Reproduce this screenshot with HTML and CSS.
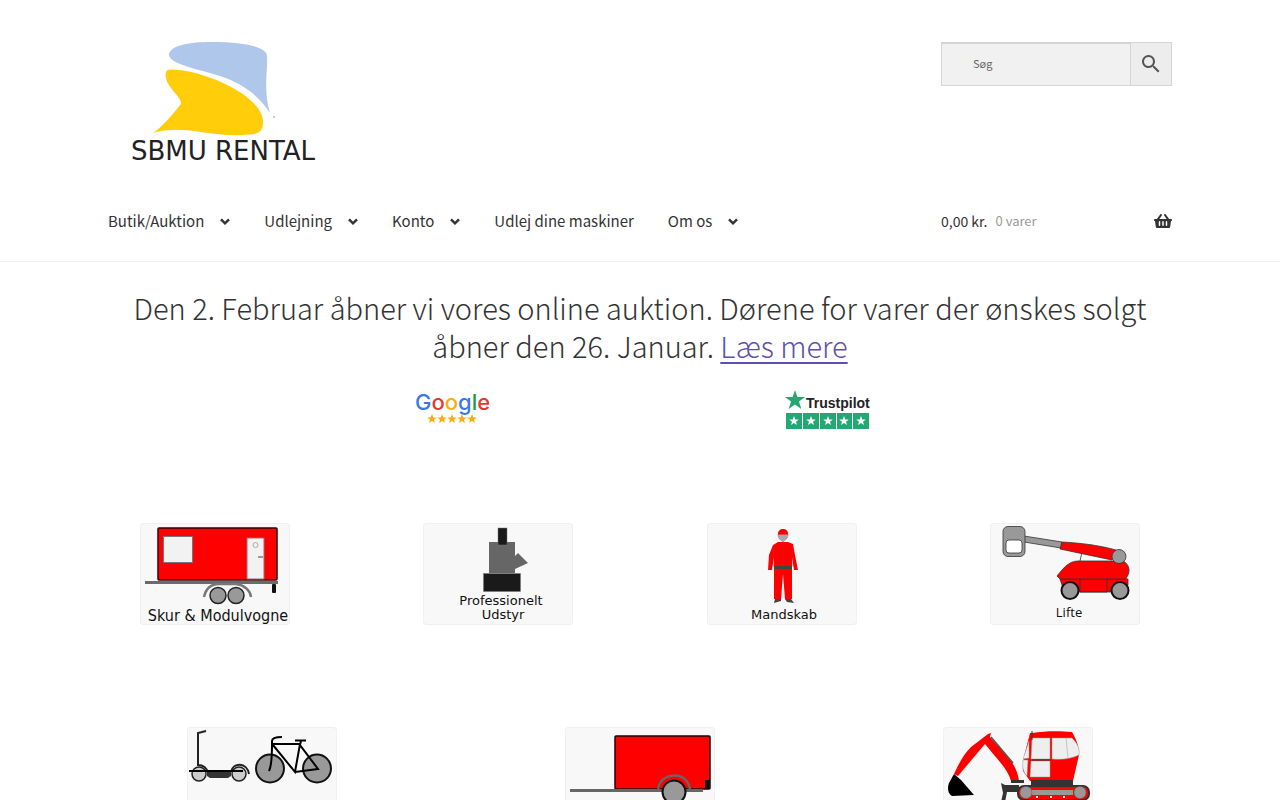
FILE: index.html
```
<!DOCTYPE html>
<html lang="da">
<head>
    <meta charset="UTF-8">
    <meta name="viewport" content="width=device-width, initial-scale=1.0">
    <title>SBMU Rental</title>
    <link rel="stylesheet" href="styles.css">
</head>
<body>
    <header class="site-header">
        <div class="container">
            <div class="header-top">
                <a href="#" class="logo" aria-label="SBMU Rental">
                    <svg width="230" height="120" viewBox="0 0 230 120">
                        <path fill="#afc7ea" d="M61 12C63 3 82 0 104 0C137 0 159 5 159 14C160 28 155 48 162 71C151 54 136 42 112 34C90 27 60 22 61 12Z"/>
                        <path fill="#ffcd0a" d="M58 30C59 26 70 28 78 29C114 36 155 58 155 80C155 90 151 93 134 93C101 95 75 82 45 91C54 85 66 71 73 62C74 54 55 44 58 30Z"/>
                        <circle cx="166" cy="75" r="1" fill="#bbb"/>
                        <text x="115" y="118" text-anchor="middle" class="logo-text">SBMU RENTAL</text>
                    </svg>
                </a>
                <form class="search" role="search">
                    <input type="search" placeholder="Søg" aria-label="Søg">
                    <button type="submit" aria-label="Søg">
                        <svg width="24" height="24" viewBox="0 0 24 24" fill="#555">
                            <path d="M15.5 14h-.79l-.28-.27A6.5 6.5 0 1 0 13.73 14.43l.27.28v.79l5 5L20.5 19zm-6 0A4.5 4.5 0 1 1 14 9.5 4.5 4.5 0 0 1 9.5 14z"/>
                        </svg>
                    </button>
                </form>
            </div>
            <div class="header-bottom">
                <nav class="main-nav">
                    <a href="#">Butik/Auktion <svg class="arrow" width="10" height="7" viewBox="0 0 10 7"><path d="M1 1.3l4 4 4-4"/></svg></a>
                    <a href="#">Udlejning <svg class="arrow" width="10" height="7" viewBox="0 0 10 7"><path d="M1 1.3l4 4 4-4"/></svg></a>
                    <a href="#">Konto <svg class="arrow" width="10" height="7" viewBox="0 0 10 7"><path d="M1 1.3l4 4 4-4"/></svg></a>
                    <a href="#">Udlej dine maskiner</a>
                    <a href="#">Om os <svg class="arrow" width="10" height="7" viewBox="0 0 10 7"><path d="M1 1.3l4 4 4-4"/></svg></a>
                </nav>
                <a href="#" class="cart">
                    <span class="amount">0,00 kr.</span>
                    <span class="count">0 varer</span>
                    <svg width="18" height="16" viewBox="0 0 576 512" fill="#333">
                        <path d="M576 216v16c0 13.255-10.745 24-24 24h-8l-26.113 182.788C514.509 462.435 494.257 480 470.37 480H105.63c-23.887 0-44.139-17.565-47.518-41.212L32 256h-8c-13.255 0-24-10.745-24-24v-16c0-13.255 10.745-24 24-24h67.341l106.78-146.821c10.395-14.292 30.407-17.453 44.701-7.058 14.293 10.395 17.453 30.408 7.058 44.701L170.477 192h235.046L326.12 82.821c-10.395-14.292-7.234-34.306 7.059-44.701 14.291-10.395 34.306-7.235 44.701 7.058L484.659 192H552c13.255 0 24 10.745 24 24zM312 392V280c0-13.255-10.745-24-24-24s-24 10.745-24 24v112c0 13.255 10.745 24 24 24s24-10.745 24-24zm112 0V280c0-13.255-10.745-24-24-24s-24 10.745-24 24v112c0 13.255 10.745 24 24 24s24-10.745 24-24zm-224 0V280c0-13.255-10.745-24-24-24s-24 10.745-24 24v112c0 13.255 10.745 24 24 24s24-10.745 24-24z"/>
                    </svg>
                </a>
            </div>
        </div>
    </header>

    <main>
        <h2 class="notice">Den 2. Februar åbner vi vores online auktion. Dørene for varer der ønskes solgt åbner den 26. Januar. <a href="#">Læs mere</a></h2>

        <div class="reviews">
            <a href="#" aria-label="Google anmeldelser">
                <svg width="76" height="40" viewBox="0 0 76 40">
                    <defs>
                        <path id="star" d="M0-5L1.3-1.6 4.8-1.5 2 .7 3 4.1 0 2.1-3 4.1-2 .7-4.8-1.5-1.3-1.6Z"/>
                    </defs>
                    <text x="0" y="20" class="google-text"><tspan fill="#3b78e7">G</tspan><tspan fill="#e33b32">o</tspan><tspan fill="#f6b011">o</tspan><tspan fill="#3b78e7">g</tspan><tspan fill="#1e9a4b">l</tspan><tspan fill="#e33b32">e</tspan></text>
                    <g fill="#f9ab0a">
                        <use href="#star" x="17" y="29"/>
                        <use href="#star" x="27" y="29"/>
                        <use href="#star" x="37" y="29"/>
                        <use href="#star" x="47" y="29"/>
                        <use href="#star" x="57" y="29"/>
                    </g>
                </svg>
            </a>
            <a href="#" aria-label="Trustpilot anmeldelser">
                <svg width="86" height="40" viewBox="0 0 86 40">
                    <path fill="#22a873" d="M10 0L12.4 7H20L14 11.500 16.300 19 10 14.500 3.700 19 6 11.500 0 7H7.600Z"/>
                    <text x="21" y="18" class="trustpilot-text">Trustpilot</text>
                    <path fill="#22a873" d="M1 23h16v16H1zM18 23h16v16H18zM35 23h16v16H35zM52 23h15v16H52zM68 23h16v16H68z"/>
                    <g fill="#fff">
                        <use href="#star" x="9" y="31"/>
                        <use href="#star" x="26" y="31"/>
                        <use href="#star" x="43" y="31"/>
                        <use href="#star" x="59" y="31"/>
                        <use href="#star" x="76" y="31"/>
                    </g>
                </svg>
            </a>
        </div>

        <div class="categories four">
            <a href="#" class="card">
                <svg viewBox="0 0 150 102">
                    <rect x="18" y="5" width="119" height="52" rx="1" fill="#f00" stroke="#300" stroke-width="1.500"/>
                    <rect x="23.500" y="13.500" width="29" height="26" fill="#f2f2f2" stroke="#777"/>
                    <rect x="107" y="15" width="17" height="41" fill="#f2f2f2" stroke="#a66"/>
                    <circle cx="115.500" cy="22" r="2.500" fill="none" stroke="#aaa"/>
                    <path d="M118 34h5" stroke="#444"/>
                    <path d="M5 59.500h133" stroke="#6b6b6b" stroke-width="3"/>
                    <path d="M64 74C66 65 72 61 79 61h17C104 62 110 67 111 74" fill="none" stroke="#777" stroke-width="2.500"/>
                    <g fill="#999" stroke="#222" stroke-width="1.500">
                        <circle cx="78" cy="72.500" r="8"/>
                        <circle cx="96" cy="72.500" r="8"/>
                    </g>
                    <rect x="132" y="61" width="4" height="9" rx="1" fill="#111"/>
                    <text x="78" y="98" class="label condensed">Skur &amp; Modulvogne</text>
                </svg>
            </a>
            <a href="#" class="card">
                <svg viewBox="0 0 150 102">
                    <path fill="#666" d="M66 19h26v14l3-3 10 10-13 6v4H66z"/>
                    <rect x="75" y="5" width="9" height="17" fill="#1a1a1a" stroke="#777" stroke-width=".5"/>
                    <rect x="60.500" y="50.500" width="37" height="18" fill="#1a1a1a" stroke="#777" stroke-width=".5"/>
                    <text x="78" y="82" class="label">Professionelt</text>
                    <text x="80" y="96" class="label">Udstyr</text>
                </svg>
            </a>
            <a href="#" class="card">
                <svg viewBox="0 0 150 102">
                    <path fill="#aaa" stroke="#777" stroke-width=".5" d="M71 11h10c0 5-3 6-5 8-2-2-5-3-5-8z"/>
                    <path fill="#f00" d="M71 11.500C70 4 82 4 81 11.500z"/>
                    <path fill="#f00" d="M71 19h10l5 2 2 11 3 15h-4l-2-13v42h-7l-2-25-2 25h-7V34l-2 13h-4l1-15 4-10z"/>
                    <path stroke="#a33" stroke-width=".5" fill="none" d="M76 20v24M67 24v20M85 24v20"/>
                    <path fill="#444" d="M67 43h18v3H67zM68 76h6v2l-7 2zM78 76h6l3 4-7-1z"/>
                    <text x="77" y="96" class="label">Mandskab</text>
                </svg>
            </a>
            <a href="#" class="card">
                <svg viewBox="0 0 150 102">
                    <g stroke="#333" stroke-width=".8">
                        <path fill="#999" d="M34 13l38 6-1 6-37-6z"/>
                        <rect x="13" y="3.500" width="22" height="30" rx="5" fill="#999"/>
                        <rect x="16" y="17" width="16" height="13" rx="3" fill="#fff"/>
                        <path fill="#f00" d="M90 38l2-9M70 56l3 9 4 4h55l6-7V56z"/>
                        <path fill="none" d="M90 56v13h27V56"/>
                        <path fill="#f00" d="M67 53C72 47 78 38 88 38h45c4 2 6 6 6 9 0 5-2 6-3 9H70z"/>
                        <path fill="#f00" d="M72 19C90 20 108 22 126 27l-4 10-52-11z"/>
                        <circle cx="129" cy="33.500" r="7" fill="#999"/>
                    </g>
                    <g fill="#999" stroke="#111" stroke-width="2">
                        <circle cx="80" cy="67.500" r="8.500"/>
                        <circle cx="130" cy="67.500" r="8.500"/>
                    </g>
                    <text x="79" y="94" class="label open">Lifte</text>
                </svg>
            </a>
        </div>

        <div class="categories three">
            <a href="#" class="card" aria-label="Løbehjul og cykler">
                <svg viewBox="0 0 150 102">
                    <g fill="#ccc" stroke="#222" stroke-width="1.500">
                        <circle cx="12" cy="47" r="7"/>
                        <circle cx="52" cy="47" r="7"/>
                    </g>
                    <path d="M20 45h24v4l-3 2H23l-3-2z" fill="#333"/>
                    <path d="M19 4l-8 2v32c6 0 9 4 10 8M44 45c2-10 16-10 18 2" fill="none" stroke="#222" stroke-width="2"/>
                    <path d="M2 44h54" stroke="#000" stroke-width="2"/>
                    <g fill="#999" stroke="#111" stroke-width="2">
                        <circle cx="83" cy="41.500" r="14"/>
                        <circle cx="130" cy="41.500" r="14"/>
                    </g>
                    <path d="M82 44c3-6 3-16 3-27v-3c0-3 4-4 10-4M86 17h27L108 45 86 18M108 45l23-3-18-24 1-4M108 13.500h11" fill="none" stroke="#000" stroke-width="2"/>
                </svg>
            </a>
            <a href="#" class="card" aria-label="Trailere">
                <svg viewBox="0 0 150 102">
                    <rect x="50" y="9" width="95" height="53" rx="1" fill="#f00" stroke="#200" stroke-width="1.500"/>
                    <path d="M5 63.500h133" stroke="#666" stroke-width="3"/>
                    <path d="M93 64c0-20 32-21 32 0" fill="none" stroke="#666" stroke-width="2.500"/>
                    <circle cx="109" cy="65" r="11.500" fill="#999" stroke="#111" stroke-width="2"/>
                    <rect x="140" y="53" width="5" height="9" rx="1" fill="#111"/>
                </svg>
            </a>
            <a href="#" class="card" aria-label="Entreprenørmaskiner">
                <svg viewBox="0 0 150 102">
                    <path fill="#f00" d="M11 47C16 36 21 27 28 20L45 7l3-1-1 4 17 19c8 9 11 17 12 25h-8C65 42 53 31 42 17L15 49z"/>
                    <path d="M48 10l22 26" stroke="#555" stroke-width="1.500"/>
                    <path fill="#000" d="M11 47l7 6 13 15-22 1c-4-2-5-8-3-13z"/>
                    <path fill="#f00" d="M89 6c12-2 28-2 40-1 4 7 7 13 7 23l-6 26H87L80 44c-1-11 4-25 7-38z"/>
                    <g fill="#eee" stroke="#999" stroke-width=".5">
                        <path d="M89 11h18v21H88zM88 34h19v16H87zM109 11h20c5 5 8 10 7 17-9 4-17 5-27 4zM123 11l2 20M86 14v17l-6 1zM80 33h5l-1 16c-4-4-5-9-4-16z"/>
                    </g>
                    <path d="M89 4v9M89 33h18" stroke="#333"/>
                    <path fill="#333" d="M88 53h42v6H88zM68 53h13v3H68zM58 56l4 2h14v7H64l-2 10h-4l2-9z"/>
                    <rect x="75" y="59" width="71" height="14" rx="6" fill="#f00" stroke="#333" stroke-width="2"/>
                    <path d="M89 65.500h41" stroke="#999" stroke-width="5"/>
                    <g fill="#999" stroke="#666" stroke-width=".5">
                        <circle cx="83" cy="65.500" r="6"/>
                        <circle cx="137" cy="65.500" r="6"/>
                    </g>
                    <path d="M93 70h2M107 70h2M120 70h2" stroke="#fff" stroke-width="2"/>
                </svg>
            </a>
        </div>
    </main>
</body>
</html>
```
FILE: styles.css
```
* {
  box-sizing: border-box;
}

body {
  margin: 0;
  background-color: #fff;
  color: #333;
  font-family: "Noto Sans CJK SC", "Open Sans", sans-serif;
  font-size: 15px;
  line-height: 24px;
}

a {
  color: inherit;
  text-decoration: none;
}

svg {
  display: block;
  overflow: visible;
}

.container {
  max-width: 1064px;
  margin: 0 auto;
}

.site-header {
  padding: 42px 32px 28px;
  border-bottom: 1px solid #f0f0f0;
}

.header-top {
  display: flex;
  justify-content: space-between;
  align-items: flex-start;
}

.logo-text {
  font-family: "DejaVu Sans", sans-serif;
  font-size: 26px;
  fill: #222;
}

.search {
  display: flex;
  width: 231px;
  height: 44px;
  border: 1px solid #d4d4d4;
}

.search input {
  flex: 1;
  min-width: 0;
  padding: 0 31px 4px;
  border: none;
  border-top: 1px solid #d4d4d4;
  border-radius: 0;
  background-color: #f1f1f1;
  color: #555;
  font-family: inherit;
  font-size: 11px;
  appearance: none;
}

.search input::placeholder {
  color: #666;
}

.search button {
  display: flex;
  align-items: center;
  justify-content: center;
  width: 41px;
  padding: 0;
  border: none;
  border-left: 1px solid #d4d4d4;
  background-color: #ededed;
  cursor: pointer;
}

.header-bottom {
  display: flex;
  justify-content: space-between;
  margin-top: 47px;
}

.main-nav {
  display: flex;
  gap: 34px;
}

.main-nav a {
  display: flex;
  align-items: center;
  gap: 16px;
}

.arrow {
  fill: none;
  stroke: #333;
  stroke-width: 2.5;
}

.cart {
  display: flex;
  align-items: center;
  width: 231px;
}

.amount {
  font-size: 14px;
}

.count {
  margin-left: 8px;
  color: #999;
  font-size: 13px;
}

.cart svg {
  margin-left: auto;
}

.notice {
  max-width: 1064px;
  margin: 26px auto 0;
  font-size: 29px;
  font-weight: 300;
  line-height: 38px;
  text-align: center;
}

.notice a {
  color: #5f4fb0;
  text-decoration: underline;
  text-decoration-thickness: 2px;
  text-underline-offset: 4px;
}

.reviews {
  display: flex;
  justify-content: center;
  gap: 294px;
  margin-top: 26px;
  padding-left: 5px;
}

.google-text {
  font-family: Inter, sans-serif;
  font-size: 22px;
  font-weight: 500;
}

.trustpilot-text {
  font-family: "Liberation Sans", sans-serif;
  font-size: 14px;
  font-weight: 700;
  fill: #222;
}

.categories {
  display: grid;
  justify-items: center;
  max-width: 1134px;
  margin: 0 auto 102px;
}

.four {
  grid-template-columns: repeat(4, 1fr);
  margin-top: 93px;
}

.three {
  grid-template-columns: repeat(3, 1fr);
}

.card {
  width: 150px;
  border-radius: 4px;
  background-color: #f8f8f8;
  box-shadow: inset 0 0 0 1px #f0f0f0;
}

.label {
  font-family: "DejaVu Sans", sans-serif;
  font-size: 13px;
  fill: #111;
  text-anchor: middle;
}

.condensed {
  font-family: "DejaVu Sans Condensed", "DejaVu Sans", sans-serif;
  font-size: 16px;
}

.open {
  font-family: "Open Sans", sans-serif;
}
```
